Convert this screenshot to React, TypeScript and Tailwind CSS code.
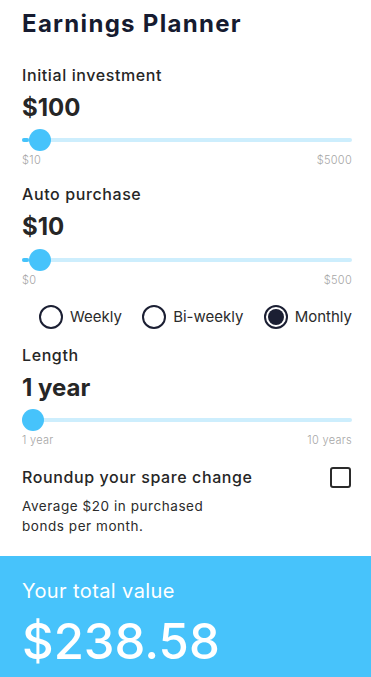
import React from "react";

function Slider({ pct, min, max }: { pct: number; min: string; max: string }) {
  return (
    <div>
      <div className="relative h-[22px] flex items-center">
        <div className="h-[4px] w-full rounded-full bg-[#cdeefd]" />
        <div
          className="absolute left-0 h-[4px] rounded-full bg-[#46c3fb]"
          style={{ width: `${pct}%` }}
        />
        <div
          className="absolute top-0 h-[22px] w-[22px] rounded-full bg-[#46c3fb]"
          style={{ left: `${pct}%` }}
        />
      </div>
      <div className="mt-[1px] flex justify-between text-[11px] leading-[16px] font-light tracking-[0.3px] text-[#a6a6a6]">
        <span>{min}</span>
        <span>{max}</span>
      </div>
    </div>
  );
}

function Radio({ label, checked }: { label: string; checked?: boolean }) {
  return (
    <div className="flex items-center gap-[7px]">
      <div className="flex h-[24px] w-[24px] items-center justify-center rounded-full border-2 border-[#1b1f33]">
        {checked && <div className="h-[16px] w-[16px] rounded-full bg-[#1b1f33]" />}
      </div>
      <span className="text-[15px] leading-[22px] text-[#2b2b2b]">{label}</span>
    </div>
  );
}

export default function App() {
  return (
    <div className="w-[371px] min-h-[677px] bg-white font-['Inter',sans-serif] flex flex-col">
      <div className="pl-[22px] pr-[19px] pt-[8px]">
        <h1 className="text-[24px] leading-[32px] font-bold tracking-[1.3px] text-[#161b30]">Earnings Planner</h1>

        <div className="mt-[23px] text-[16px] leading-[24px] font-medium tracking-[0.6px] text-[#262626]">Initial investment</div>
        <div className="mt-[5px] text-[24px] leading-[32px] font-bold text-[#262626]">$100</div>
        <div className="mt-[5px]">
          <Slider pct={2} min="$10" max="$5000" />
        </div>

        <div className="mt-[14px] text-[16px] leading-[24px] font-medium tracking-[0.6px] text-[#262626]">Auto purchase</div>
        <div className="mt-[5px] text-[24px] leading-[32px] font-bold text-[#262626]">$10</div>
        <div className="mt-[6px]">
          <Slider pct={2} min="$0" max="$500" />
        </div>

        <div className="mt-[17px] flex items-center justify-between pl-[17px]">
          <Radio label="Weekly" />
          <Radio label="Bi-weekly" />
          <Radio label="Monthly" checked />
        </div>

        <div className="mt-[14px] text-[16px] leading-[24px] font-medium tracking-[0.6px] text-[#262626]">Length</div>
        <div className="mt-[5px] text-[24px] leading-[32px] font-bold text-[#262626]">1 year</div>
        <div className="mt-[5px]">
          <Slider pct={0} min="1 year" max="10 years" />
        </div>

        <div className="mt-[17px] flex items-center justify-between">
          <span className="text-[16px] leading-[24px] font-medium tracking-[0.6px] text-[#262626]">Roundup your spare change</span>
          <div className="mr-px h-[21px] w-[21px] rounded-[3px] border-2 border-[#2b2b2b]" />
        </div>
        <p className="mt-[7px] w-[210px] text-[13.5px] leading-[20px] tracking-[0.55px] text-[#2b2b2b]">
          Average $20 in purchased bonds per month.
        </p>
      </div>

      <div className="mt-[20px] flex-1 bg-[#47c3fb] pl-[22px] pt-[21px] text-white">
        <div className="text-[20px] leading-[28px] tracking-[0.4px]">Your total value</div>
        <div className="mt-[7px] text-[49px] leading-[60px] font-medium">$238.58</div>
      </div>
    </div>
  );
}
